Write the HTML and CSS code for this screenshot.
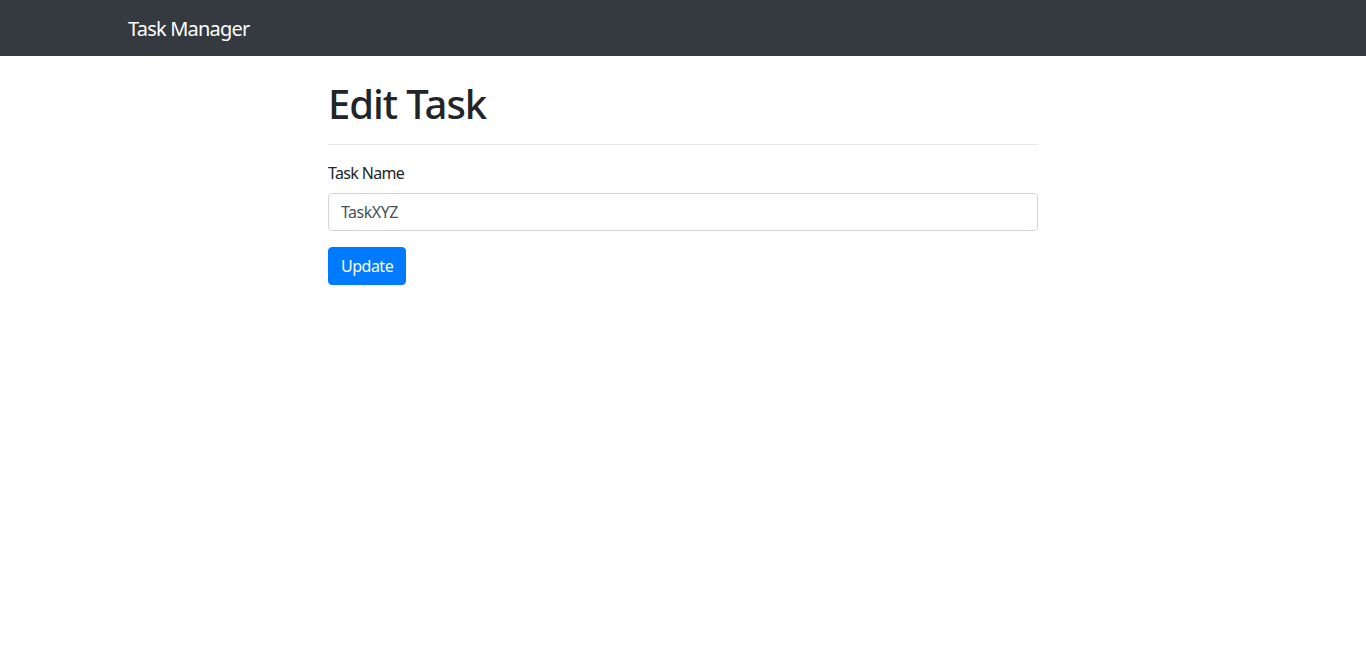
FILE: index.html
```html
<!DOCTYPE html>
<html lang="en">
<head>
<meta charset="utf-8">
<title>Task Manager</title>
<link rel="stylesheet" href="styles.css">
</head>
<body>
<nav class="navbar">
  <div class="nav-inner">
    <a class="brand" href="#">Task Manager</a>
  </div>
</nav>
<main class="content">
  <h1 class="title">Edit Task</h1>
  <hr class="divider">
  <form class="form">
    <div class="form-group">
      <label class="label" for="taskName">Task Name</label>
      <input class="input" id="taskName" type="text" value="TaskXYZ">
    </div>
    <button class="btn" type="button">Update</button>
  </form>
</main>
</body>
</html>
```
FILE: styles.css
```css
* { box-sizing: border-box; }
html, body { margin: 0; padding: 0; }
body {
  font-family: "Noto Sans", "Open Sans", "Liberation Sans", sans-serif;
  font-size: 16px;
  line-height: 1.5;
  color: #212529;
  background: #fff;
}
.navbar {
  background: #343a40;
  height: 56px;
  display: flex;
  align-items: center;
}
.nav-inner {
  width: 1140px;
  margin: 0 auto;
  padding: 2px 15px 0;
}
.brand {
  color: #fff;
  text-decoration: none;
  font-size: 20px;
  line-height: 30px;
  letter-spacing: -0.8px;
}
.content {
  width: 710px;
  margin: 24px auto 0;
}
.title {
  margin: 0 0 8px;
  font-size: 40px;
  font-weight: 500;
  line-height: 48px;
  letter-spacing: -1.05px;
}
.divider {
  margin: 16px 0;
  border: 0;
  border-top: 1px solid rgba(0,0,0,0.1);
}
.form { margin: 0; }
.form-group { margin-bottom: 16px; }
.label {
  display: block;
  margin-bottom: 8px;
  letter-spacing: -0.65px;
}
.input {
  display: block;
  width: 100%;
  height: 38px;
  padding: 6px 12px;
  font: inherit;
  color: #495057;
  background: #fff;
  border: 1px solid #ced4da;
  border-radius: 4px;
  letter-spacing: -0.5px;
}
.btn {
  display: inline-block;
  height: 38px;
  padding: 6px 12px;
  font: inherit;
  color: #fff;
  background: #007bff;
  border: 1px solid #007bff;
  border-radius: 4px;
  cursor: pointer;
  letter-spacing: -0.5px;
}
```
